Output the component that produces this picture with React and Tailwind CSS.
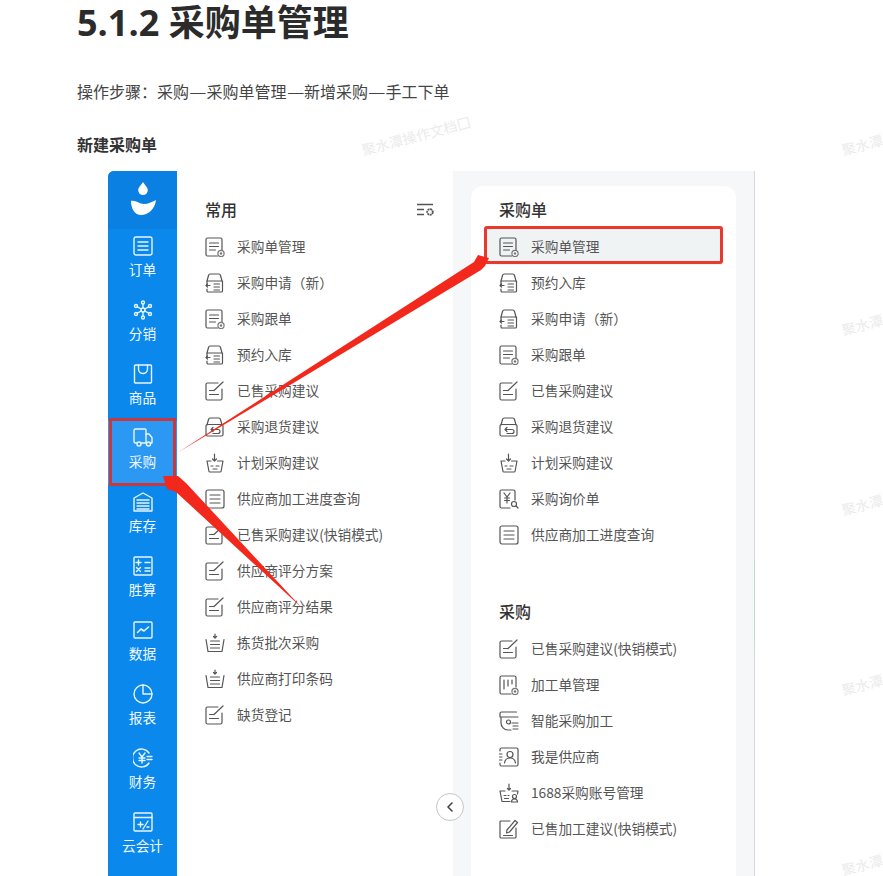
import React from 'react';

// line icons, all on a 20x20 box
const Svg = ({ children, className = 'text-[#555]', width = '1.2' }) => (
  <svg viewBox="0 0 20 20" fill="none" stroke="currentColor" strokeWidth={width} strokeLinecap="round" strokeLinejoin="round" className={`w-5 h-5 shrink-0 ${className}`}>
    {children}
  </svg>
);

const Gear = ({ x = 16, y = 16.5, r = 2.2 }) => (
  <>
    <circle cx={x} cy={y} r={r + 0.9} fill="#fff" stroke="#777" />
    <circle cx={x} cy={y} r={r - 1} fill="#777" stroke="none" />
  </>
);

const icons = {
  docGear: (
    <>
      <path d="M12.5 19H2.5A1.5 1.5 0 0 1 1 17.5v-15A1.5 1.5 0 0 1 2.5 1h13A1.5 1.5 0 0 1 17 2.5V13" />
      <path d="M4.5 6h9M4.5 9.5h9M4.5 13h6" />
      <Gear />
    </>
  ),
  trayIn: (
    <>
      <path d="M2 8l1.5-5.5A2 2 0 0 1 5.300 1h8.400a2 2 0 0 1 1.800 1.500L17 8" />
      <path d="M2 8h15.500v10a1 1 0 0 1-1 1H3a1 1 0 0 1-1-1v-2M2 12v-4" />
      <path d="M5 12.500H1m1.500-1.500L1 12.500 2.500 14M9 11h5.500M9 14h5.500M9 17h5.500" />
    </>
  ),
  noteEdit: (
    <>
      <path d="M13 2H2.500A1.500 1.500 0 0 0 1 3.500v14A1.500 1.500 0 0 0 2.500 19h13a1.500 1.500 0 0 0 1.500-1.500V8" />
      <path d="M9 9.500l9-8.500M4.500 9.500H9M4.500 13.500h9" />
    </>
  ),
  trayBack: (
    <>
      <path d="M2 8l1.500-5.500A2 2 0 0 1 5.300 1h8.400a2 2 0 0 1 1.800 1.500L17 8" />
      <rect x="1" y="7.500" width="17" height="11.500" rx="1.500" />
      <path d="M6 12.500h7a2 2 0 0 1 0 4H8M6 12.500L8 10.500M6 12.500l2 2" />
    </>
  ),
  basket: (
    <>
      <path d="M2 8h4M12.500 8H18l-2 10.500a1 1 0 0 1-1 .5H5a1 1 0 0 1-1-.5L2 8" />
      <path d="M9.500 1v7m-2-2l2 2 2-2M6 13h2M11 13h3M8 16h4" />
    </>
  ),
  doc: (
    <>
      <rect x="1" y="1" width="18" height="18" rx="2" />
      <path d="M5 6h10M5 10h10M5 14h10" />
    </>
  ),
  stack: (
    <>
      <path d="M1 6.500L3 18.500h14L19 6.500" />
      <path d="M10 1v4m-1.500-1.500L10 5l1.500-1.500M5.500 8h9M5.500 11.500h9M5.500 15h9" />
    </>
  ),
  yenSearch: (
    <>
      <path d="M11 19H2.500A1.500 1.500 0 0 1 1 17.500v-15A1.500 1.500 0 0 1 2.500 1h12A1.500 1.500 0 0 1 16 2.500V11" />
      <path d="M5 4l3 4 3-4M8 8v6M5.500 9h5M5.500 11.500h5" />
      <circle cx="15" cy="15" r="2.500" />
      <path d="M17 17l2 2" />
    </>
  ),
  board: (
    <>
      <path d="M12 19H2.500A1.500 1.500 0 0 1 1 17.500v-15A1.500 1.500 0 0 1 2.500 1h13A1.500 1.500 0 0 1 17 2.500V12" />
      <path d="M5 5v9M9 5v6M13 5v4" />
      <Gear />
    </>
  ),
  smart: (
    <>
      <path d="M1 2.500A1.500 1.500 0 0 1 2.500 1h15M1 2.500v3.500h18M2 6v6a7 7 0 0 0 7 7h3" />
      <circle cx="9.500" cy="11" r="2" />
      <path d="M13 12h6M14 15h5M14 18h5" />
    </>
  ),
  person: (
    <>
      <path d="M1 4V2.500A1.500 1.500 0 0 1 2.500 1h15A1.500 1.500 0 0 1 19 2.500v15a1.500 1.500 0 0 1-1.500 1.500h-15A1.500 1.500 0 0 1 1 17.500V16" />
      <circle cx="11" cy="7.500" r="3" />
      <path d="M5.500 16c.5-3.500 3-5 5.500-5s5 1.500 5.500 5M0 7h3M0 10h3M0 13h3" />
    </>
  ),
  basketUser: (
    <>
      <path d="M1 8h5M13 8h6l-.5 3M1 8l2 10.500h8" />
      <path d="M10 1v6m-1.500-1.500L10 7l1.500-1.500M5 12.500h2M9 12.500h1M5.500 15.500h4" />
      <circle cx="15.500" cy="13.500" r="2" />
      <path d="M12.500 19c0-2 1.500-3 3-3s3 1 3 3z" />
    </>
  ),
  penNote: (
    <>
      <path d="M11 2H2a1 1 0 0 0-1 1v15a1 1 0 0 0 1 1h14a1 1 0 0 0 1-1V9" />
      <path d="M8 11l8-9.500 2.500 2L10.500 13 7.500 14zM4.500 16.500h9" />
    </>
  ),
};

const sideIcons = {
  order: (
    <>
      <rect x="1" y="1" width="18" height="18" rx="2" />
      <path d="M5 6h10M5 10h10M5 14h10" />
    </>
  ),
  network: (
    <>
      <circle cx="10" cy="10" r="2" />
      <circle cx="10" cy="2.500" r="1.500" />
      <circle cx="10" cy="17.500" r="1.500" />
      <circle cx="3" cy="6" r="1.500" />
      <circle cx="17" cy="6" r="1.500" />
      <circle cx="3" cy="14" r="1.500" />
      <circle cx="17" cy="14" r="1.500" />
      <path d="M10 4v4M10 12v4M4.300 6.800l4 2.200M15.700 6.800l-4 2.200M4.300 13.200l4-2.200M15.700 13.200l-4-2.200" />
    </>
  ),
  bag: (
    <>
      <path d="M2.500 1h15A1 1 0 0 1 18.500 2v16a1 1 0 0 1-1 1h-15a1 1 0 0 1-1-1V2a1 1 0 0 1 1-1z" />
      <path d="M5.500 1v4a4.500 4.500 0 0 0 9 0V1" />
    </>
  ),
  truck: (
    <>
      <path d="M4 15H2.500A1.500 1.500 0 0 1 1 13.500v-11A1.500 1.500 0 0 1 2.500 1H12a1 1 0 0 1 1 1v13H8" />
      <path d="M13 6h3l3 3.500V15h-2M13 15h.5" />
      <circle cx="6" cy="16" r="2" />
      <circle cx="15.500" cy="16" r="2" />
    </>
  ),
  store: (
    <>
      <path d="M1 19V6l9-5 9 5v13z" />
      <path d="M4 8h12M4 11h12M4 14h12M4 17h12" />
    </>
  ),
  calc: (
    <>
      <rect x="1" y="1" width="18" height="18" rx="1" />
      <path d="M5.500 4v5M3 6.500h5M12 6.500h5M3.500 11.500l4 4M7.500 11.500l-4 4M12 12h5M12 15h5" />
    </>
  ),
  chart: (
    <>
      <rect x="1" y="2" width="18" height="16" rx="1" />
      <path d="M4.500 12.500l3.500-3.500 3 2 4.500-4" strokeWidth="1.600" />
    </>
  ),
  pie: (
    <>
      <circle cx="10" cy="10" r="9" />
      <path d="M10 1v9h9" />
    </>
  ),
  yen: (
    <>
      <path d="M16 5A9 9 0 1 0 16 15" />
      <path d="M6 5l3 4 3-4M9 9v6M6 10h6M6 12.500h6M14 8.500h5M14 11.500h5" />
    </>
  ),
  taxes: (
    <>
      <rect x="1" y="1" width="18" height="18" rx="1" />
      <path d="M1 5.500h18M5 12.500h5M7.500 10v5M15 9l-5 8M14 15h2" />
    </>
  ),
};

const sideItems = [
  ['order', '订单'],
  ['network', '分销'],
  ['bag', '商品'],
  ['truck', '采购', true],
  ['store', '库存'],
  ['calc', '胜算'],
  ['chart', '数据'],
  ['pie', '报表'],
  ['yen', '财务'],
  ['taxes', '云会计'],
];

const commonItems = [
  ['docGear', '采购单管理'],
  ['trayIn', '采购申请（新）'],
  ['docGear', '采购跟单'],
  ['trayIn', '预约入库'],
  ['noteEdit', '已售采购建议'],
  ['trayBack', '采购退货建议'],
  ['basket', '计划采购建议'],
  ['doc', '供应商加工进度查询'],
  ['noteEdit', '已售采购建议(快销模式)'],
  ['noteEdit', '供应商评分方案'],
  ['noteEdit', '供应商评分结果'],
  ['stack', '拣货批次采购'],
  ['stack', '供应商打印条码'],
  ['noteEdit', '缺货登记'],
];

const orderItems = [
  ['docGear', '采购单管理', true],
  ['trayIn', '预约入库'],
  ['trayIn', '采购申请（新）'],
  ['docGear', '采购跟单'],
  ['noteEdit', '已售采购建议'],
  ['trayBack', '采购退货建议'],
  ['basket', '计划采购建议'],
  ['yenSearch', '采购询价单'],
  ['doc', '供应商加工进度查询'],
];

const purchaseItems = [
  ['noteEdit', '已售采购建议(快销模式)'],
  ['board', '加工单管理'],
  ['smart', '智能采购加工'],
  ['person', '我是供应商'],
  ['basketUser', '1688采购账号管理'],
  ['penNote', '已售加工建议(快销模式)'],
];

const watermarkTops = ['top-[140px]', 'top-[320px]', 'top-[500px]', 'top-[680px]', 'top-[860px]'];

const Dash = () => <span className="inline-block w-[17.5px] text-center scale-x-[1.2]">—</span>;

function MenuRow({ icon, label, active }) {
  return (
    <div className={`flex items-center gap-3 h-9 text-[13.7px] text-[#555] whitespace-nowrap ${active ? '-ml-[14px] pl-[14px] w-[237px] bg-[#f0f3f4]' : ''}`}>
      <Svg>{icons[icon]}</Svg>
      <span className="pb-[2px]">{label}</span>
    </div>
  );
}

function SideItem({ icon, label, active }) {
  return (
    <div className={`flex flex-col items-center h-16 pt-[7px] gap-[3px] text-[13.7px] leading-5 text-[#f2faff] ${active ? 'bg-[#2b98f4]' : ''}`}>
      <Svg className="text-[#e6f5ff]" width="1.4">{sideIcons[icon]}</Svg>
      <span>{label}</span>
    </div>
  );
}

export default function App() {
  return (
    <div className="relative w-[883px] h-[876px] overflow-hidden bg-white font-['Noto_Sans_CJK_SC',sans-serif]">
      <div className="pl-[77px]">
        <h1 className="h-[46px] text-[36px] leading-[46px] font-bold text-[#2b2b2b] font-['Open_Sans','Noto_Sans_CJK_SC',sans-serif]">5.1.2 采购单管理</h1>
        <p className="mt-[34px] h-6 text-[16px] leading-[22px] text-[#444]">
          操作步骤：采购<Dash />采购单管理<Dash />新增采购<Dash />手工下单
        </p>
        <p className="mt-[29px] h-6 text-[16px] leading-[22px] font-bold text-[#333]">新建采购单</p>
      </div>

      <div className="flex mt-[14px] ml-[108px] w-[647px] h-[705px] border-r border-[#d4d8d8]">
        {/* left nav */}
        <div className="w-[69px] shrink-0 bg-[#0a88ec] rounded-tl-md overflow-hidden">
          <div className="flex items-center justify-center h-[58px] bg-[#0a80e2]">
            <svg viewBox="0 0 30 40" className="w-[30px] h-10" fill="#fff">
              <path d="M15 2c1.500 3 4.800 5 4.800 8.300a4.800 4.800 0 0 1-9.600 0C10.200 7 13.500 5 15 2z" />
              <path d="M3 21c5-1 8 3 13 3 4 0 8-2 12-4-1 9-8 15-15 15C7 35 3 29 3 21z" />
            </svg>
          </div>
          {sideItems.map(([icon, label, active]) => (
            <SideItem key={label} icon={icon} label={label} active={active} />
          ))}
        </div>

        {/* common list */}
        <div className="w-[276px] shrink-0 pl-7 pt-[27px]">
          <div className="flex items-center justify-between h-6 pr-[18px] mb-[7px]">
            <span className="text-[16px] leading-[22px] pb-[2px] font-medium text-[#333]">常用</span>
            <svg viewBox="0 0 18 14" className="w-[18px] h-[14px] text-[#555]" fill="none" stroke="currentColor" strokeWidth="1.400">
              <path d="M0 1.500h16M0 6.500h7M0 11.500h7" />
              <circle cx="13" cy="9" r="2.800" strokeDasharray="2 0.600" strokeWidth="1.800" />
            </svg>
          </div>
          {commonItems.map(([icon, label]) => (
            <MenuRow key={label} icon={icon} label={label} />
          ))}
        </div>

        {/* right list */}
        <div className="flex-1 bg-[#f5f7f8] pl-[18px] pt-[15px]">
          <div className="w-[265px] h-full bg-white rounded-t-xl pl-7 pt-3">
            <div className="h-6 mb-[7px] text-[16px] leading-[22px] font-medium text-[#333]">采购单</div>
            {orderItems.map(([icon, label, active]) => (
              <MenuRow key={label} icon={icon} label={label} active={active} />
            ))}
            <div className="mt-[47px] h-6 mb-[7px] text-[16px] leading-[22px] font-medium text-[#333]">采购</div>
            {purchaseItems.map(([icon, label]) => (
              <MenuRow key={label} icon={icon} label={label} />
            ))}
          </div>
        </div>
      </div>

      {/* collapse button */}
      <div className="absolute left-[436px] top-[793px] w-[28px] h-[28px] flex items-center justify-center rounded-full border border-[#c4c8c8] bg-white">
        <svg viewBox="0 0 10 12" className="w-[10px] h-3" fill="none" stroke="#444" strokeWidth="1.600" strokeLinecap="round" strokeLinejoin="round">
          <path d="M7 2L3 6l4 4" />
        </svg>
      </div>

      {/* green scroll mark on the panel edge */}
      <div className="absolute left-[754px] top-[560px] w-px h-[82px] bg-[#bfe0bf]" />

      {/* watermarks */}
      <div className="absolute left-[362px] top-[140px] origin-left -rotate-[15deg] text-[14px] leading-5 whitespace-nowrap text-[#ebebeb]">聚水潭操作文档囗</div>
      {watermarkTops.map((top) => (
        <div key={top} className={`absolute left-[842px] ${top} origin-left -rotate-[15deg] text-[14px] leading-5 whitespace-nowrap text-[#ebebeb]`}>聚水潭</div>
      ))}

      {/* red annotation boxes */}
      <div className="absolute left-[109px] top-[418px] w-[67px] h-[68px] border-[3px] border-[#c8393f]" />
      <div className="absolute left-[484px] top-[226px] w-[239px] h-[38px] rounded-[3px] border-[3px] border-[#e8392c]" />

      {/* red annotation arrows */}
      <svg viewBox="0 0 883 876" className="absolute inset-0 w-[883px] h-[876px] pointer-events-none" fill="#f3281c">
        <path d="M177 453L474 262L478 255L489 258L485 266L481 270Z" />
        <path d="M163 476L178 476L186 483L302 608L176 492L167 489Z" />
      </svg>
    </div>
  );
}
